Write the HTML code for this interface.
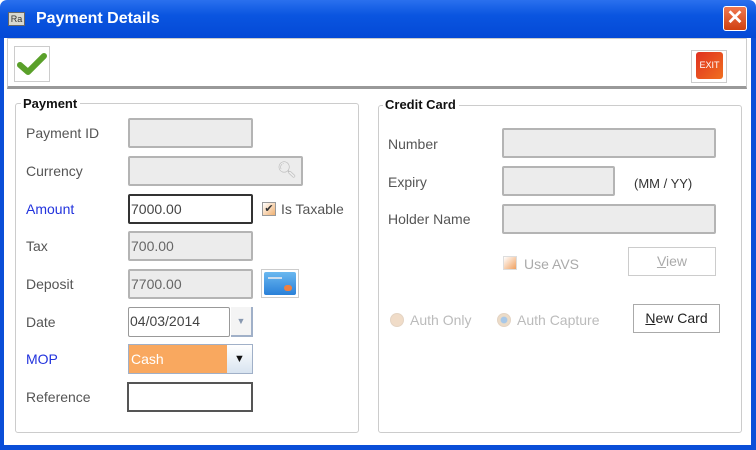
<!DOCTYPE html>
<html><head><style>
*{margin:0;padding:0;box-sizing:border-box}
body{width:756px;height:450px;overflow:hidden;background:#fff;font-family:"Liberation Sans",sans-serif;font-size:14px;color:#444;position:relative}
.a{position:absolute}
.lbl{position:absolute;color:#555;font-size:14px;line-height:16px}
.f{position:absolute;background:#ececec;border:2px solid #b4b4b4;border-radius:2px;font-size:14px;color:#666;padding-left:1px;line-height:26px}
.grp{position:absolute;border:1px solid #ccc;border-radius:3px}
.leg{position:absolute;background:#fff;font-weight:bold;color:#111;font-size:13px;padding:0 3px 0 2px;line-height:15px}
.btn{position:absolute;border:1px solid #ccc;background:#fff;text-align:center;font-size:14px;line-height:27px}
</style></head><body>
<div class="a" style="left:0;top:0;width:756px;height:38px;background:linear-gradient(#2a70ee,#0a55e0 40%,#0449d6);border-radius:7px 7px 0 0"></div>
<div class="a" style="left:0;top:38px;width:4px;height:412px;background:#0a4ed8"></div>
<div class="a" style="left:751px;top:38px;width:5px;height:412px;background:#0a4ed8"></div>
<div class="a" style="left:0;top:445px;width:756px;height:5px;background:#0a4ed8"></div>
<div class="a" style="left:8px;top:12px;width:17px;height:14px;background:#d8d8d0;border:1px solid #666;font-size:9px;color:#333;line-height:12px;text-align:center">Ra</div>
<div class="a" style="left:36px;top:10px;color:#fff;font-weight:bold;font-size:16px">Payment Details</div>
<div class="a" style="left:723px;top:6px;width:24px;height:25px;background:linear-gradient(#f07850,#d04010);border:1px solid #fff;border-radius:3px;color:#fff;font-size:20px;line-height:22px;text-align:center;font-weight:bold">✕</div>
<div class="a" style="left:7px;top:38px;width:740px;height:51px;border:1px solid #ccc;border-bottom:3px solid #999"></div>
<div class="a" style="left:14px;top:46px;width:36px;height:36px;border:1px solid #ccc"></div>
<svg class="a" style="left:17px;top:51px" width="30" height="26"><path d="M3 14 L11 21 L27 5" stroke="#5aa02a" stroke-width="6" fill="none" stroke-linecap="round" stroke-linejoin="round"/></svg>
<div class="a" style="left:691px;top:50px;width:36px;height:33px;border:1px solid #ccc"></div>
<div class="a" style="left:696px;top:52px;width:27px;height:27px;background:linear-gradient(135deg,#e03020,#f07020);border-radius:3px;color:#fff;font-size:9px;line-height:27px;text-align:center">EXIT</div>

<div class="grp" style="left:15px;top:103px;width:344px;height:330px"></div>
<div class="leg" style="left:21px;top:96px">Payment</div>
<div class="lbl" style="left:26px;top:125px">Payment ID</div>
<div class="lbl" style="left:26px;top:163px">Currency</div>
<div class="lbl" style="left:26px;top:201px;color:#2233dd">Amount</div>
<div class="lbl" style="left:26px;top:238px">Tax</div>
<div class="lbl" style="left:26px;top:276px">Deposit</div>
<div class="lbl" style="left:26px;top:314px">Date</div>
<div class="lbl" style="left:26px;top:351px;color:#2233dd">MOP</div>
<div class="lbl" style="left:26px;top:389px">Reference</div>
<div class="f" style="left:128px;top:118px;width:125px;height:30px"></div>
<div class="f" style="left:128px;top:156px;width:175px;height:30px"><span style="position:absolute;right:4px;top:0;color:#bbb;font-size:16px">&#x1F50D;&#xFE0E;</span></div>
<div class="f" style="left:128px;top:194px;width:125px;height:30px;background:#fff;border-color:#333;color:#444">7000.00</div>
<div class="a" style="left:262px;top:202px;width:14px;height:14px;border:1px solid #999;background:linear-gradient(135deg,#fff,#f0b070);font-size:11px;line-height:12px;text-align:center;color:#333">✔</div>
<div class="lbl" style="left:281px;top:201px">Is Taxable</div>
<div class="f" style="left:128px;top:231px;width:125px;height:30px">700.00</div>
<div class="f" style="left:128px;top:269px;width:125px;height:30px">7700.00</div>
<div class="a" style="left:261px;top:269px;width:38px;height:29px;border:1px solid #ccc"></div>
<div class="a" style="left:264px;top:272px;width:32px;height:23px;background:linear-gradient(#6ab8f0,#2a80d8);border-radius:2px"><div class="a" style="left:20px;top:13px;width:8px;height:6px;border-radius:3px;background:#f08040"></div><div class="a" style="left:4px;top:5px;width:14px;height:2px;background:#cde"></div></div>
<div class="f" style="left:128px;top:307px;width:102px;height:30px;background:#fff;border-width:1px;border-color:#999;color:#444">04/03/2014</div>
<div class="a" style="left:231px;top:307px;width:22px;height:30px;border-right:2px solid #a0b0c8;border-bottom:2px solid #a0b0c8;background:#f4f4f4;color:#8898b0;font-size:9px;text-align:center;line-height:28px">▼</div>
<div class="a" style="left:128px;top:344px;width:125px;height:30px;border:1px solid #a0b0c8;background:#f9a85f"></div>
<div class="a" style="left:131px;top:351px;color:#fff;font-size:14px">Cash</div>
<div class="a" style="left:227px;top:345px;width:25px;height:28px;background:linear-gradient(#fff,#d8e4f0);color:#111;font-size:11px;line-height:28px;text-align:center">▼</div>
<div class="a" style="left:127px;top:382px;width:126px;height:30px;border:2px solid #555;background:#fff"></div>

<div class="grp" style="left:378px;top:105px;width:364px;height:328px"></div>
<div class="leg" style="left:383px;top:97px">Credit Card</div>
<div class="lbl" style="left:388px;top:136px">Number</div>
<div class="lbl" style="left:388px;top:174px">Expiry</div>
<div class="lbl" style="left:388px;top:211px">Holder Name</div>
<div class="f" style="left:502px;top:128px;width:214px;height:30px"></div>
<div class="f" style="left:502px;top:166px;width:113px;height:30px"></div>
<div class="lbl" style="left:634px;top:176px;font-size:13px;color:#333">(MM / YY)</div>
<div class="f" style="left:502px;top:204px;width:214px;height:30px"></div>
<div class="a" style="left:503px;top:256px;width:14px;height:14px;background:linear-gradient(135deg,#fff,#f0a060);border:1px solid #ddd"></div>
<div class="lbl" style="left:524px;top:256px;color:#aaa">Use AVS</div>
<div class="btn" style="left:628px;top:247px;width:88px;height:29px;color:#aaa;border-color:#ccc"><u>V</u>iew</div>
<div class="a" style="left:390px;top:313px;width:14px;height:14px;border-radius:50%;background:#f0dcc8;border:1px solid #e4d4c4"></div>
<div class="lbl" style="left:410px;top:312px;color:#bbb">Auth Only</div>
<div class="a" style="left:497px;top:313px;width:14px;height:14px;border-radius:50%;background:radial-gradient(#a8c8e8 35%,#ecdcc8 45%);border:1px solid #e4d4c4"></div>
<div class="lbl" style="left:517px;top:312px;color:#bbb">Auth Capture</div>
<div class="btn" style="left:633px;top:304px;width:87px;height:29px;color:#222;border-color:#aaa"><u>N</u>ew Card</div>
</body></html>
